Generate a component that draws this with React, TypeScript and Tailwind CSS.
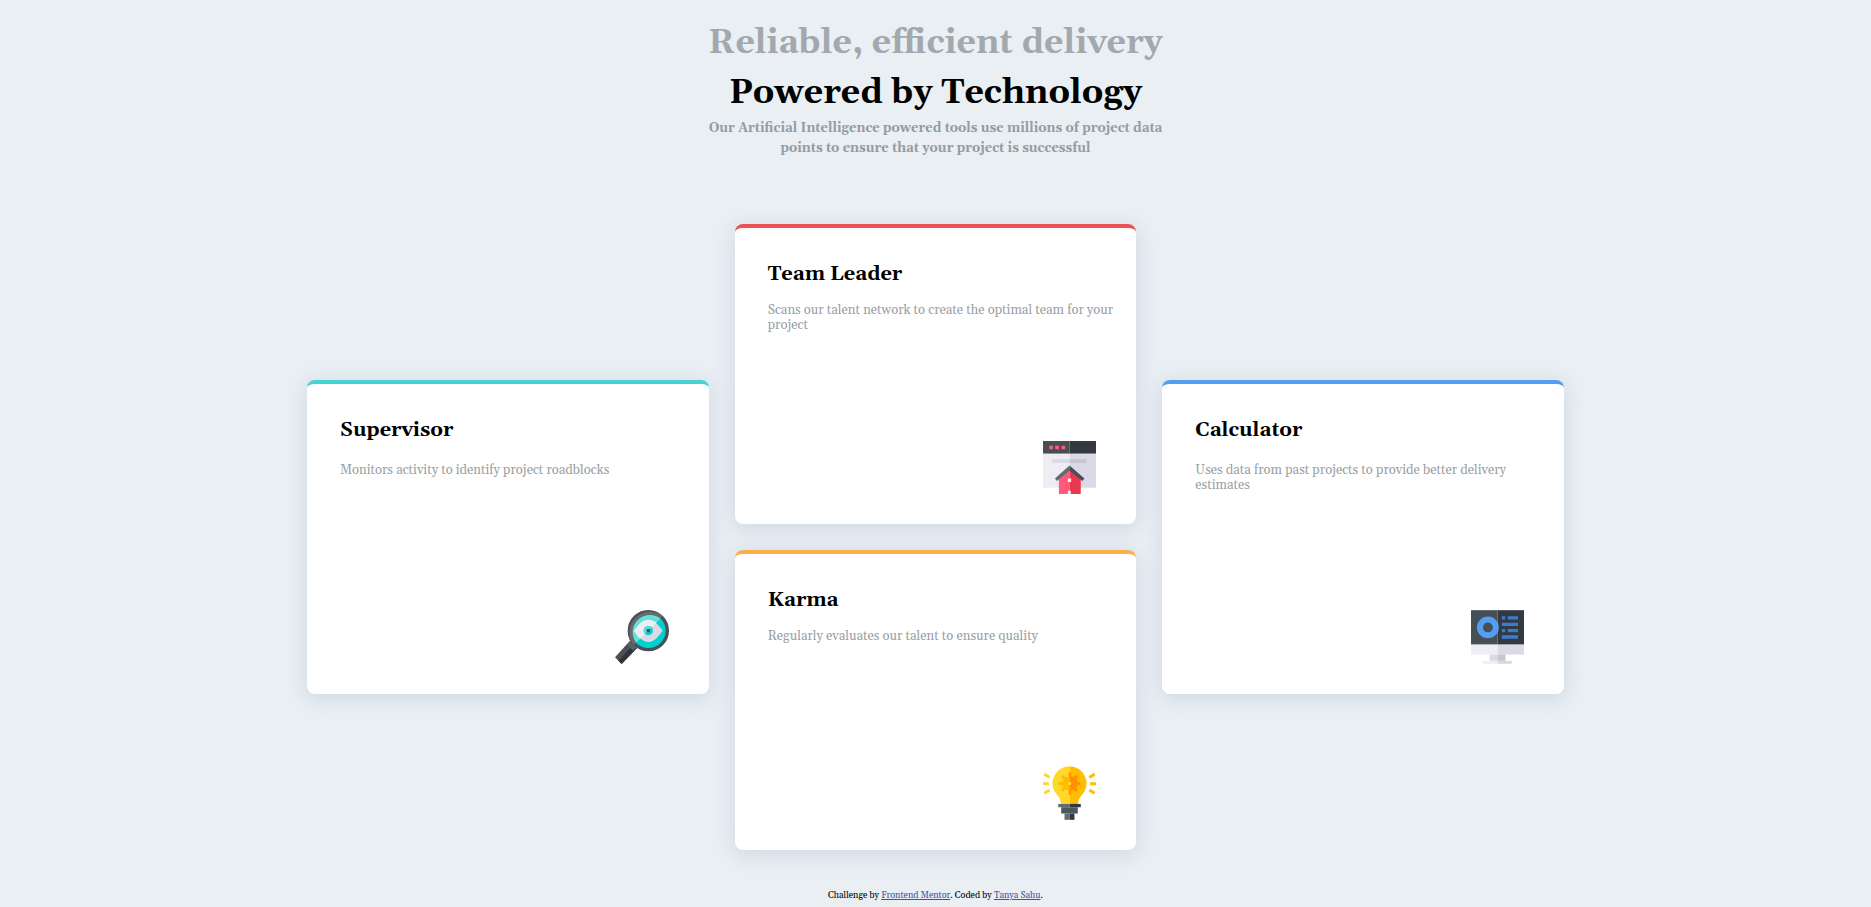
import type { ReactNode } from "react";

function SupervisorIcon() {
  return (
    <svg viewBox="0 0 162 162" className="size-[54px]" aria-hidden="true">
      <path d="M45 92 L66 114 L20 162 L0 142 Z" fill="#4b5056" />
      <path d="M56 103 L66 114 L20 162 L10 152 Z" fill="#2f3439" />
      <path d="M47 94 L59 101 L65 112 L54 122 L37 104 Z" fill="#5a6067" />
      <circle cx="100" cy="62" r="57" fill="#00cfcf" />
      <path d="M60 102 A57 57 0 0 1 140 22 Z" fill="#60e2da" />
      <circle cx="100" cy="62" r="57" fill="none" stroke="#4a5056" strokeWidth="10" />
      <path d="M60 102 A57 57 0 0 1 140 22" fill="none" stroke="#656b71" strokeWidth="10" />
      <path d="M57 62 C72 40 86 29 100 29 C114 29 128 40 143 62 C128 84 114 96 100 96 C86 96 72 84 57 62 Z" fill="#dbd9e5" />
      <path d="M57 62 C72 40 86 29 100 29 C110 29 119 34 125 38 L75 86 C69 80 63 72 57 62 Z" fill="#efedf4" />
      <circle cx="100" cy="62" r="14" fill="#16cccb" />
      <path d="M90 72 A14 14 0 0 1 110 52 Z" fill="#58ddd6" />
      <rect x="95" y="57" width="10" height="10" fill="#4a5056" />
    </svg>
  );
}

function TeamIcon() {
  return (
    <svg viewBox="0 0 160 160" className="size-[53px]" aria-hidden="true">
      <path d="M0 38 H80 V141 H0 Z" fill="#efedf4" />
      <path d="M80 38 H160 V141 H80 Z" fill="#dbd9e5" />
      <path d="M0 0 H80 V38 H0 Z" fill="#474f56" />
      <path d="M80 0 H160 V38 H80 Z" fill="#323940" />
      <path d="M19 14 H30 V25 H19 Z M37 14 H48 V25 H37 Z M56 14 H67 V25 H56 Z" fill="#ff5b78" />
      <path d="M28 55 H80 V66 H28 Z" fill="#dbd9e5" />
      <path d="M80 55 H131 V66 H80 Z" fill="#c7c5d2" />
      <path d="M48 110 L80 84 V160 H48 Z" fill="#ff5b78" />
      <path d="M80 84 L114 110 V160 H80 Z" fill="#e9374f" />
      <path d="M80 74 V90 L42 121 L36 113 Z" fill="#656b71" />
      <path d="M80 74 L125 113 L119 121 L80 90 Z" fill="#474f56" />
      <path d="M75 113 H85 V124 H75 Z M75 150 H84 V160 H75 Z" fill="#efedf4" />
    </svg>
  );
}

function CalculatorIcon() {
  return (
    <svg viewBox="0 0 160 162" className="h-[54px] w-[53px]" aria-hidden="true">
      <path d="M0 0 H80 V104 H0 Z" fill="#474f56" />
      <path d="M80 0 H160 V104 H80 Z" fill="#323940" />
      <path d="M0 104 H80 V134 H0 Z" fill="#efedf4" />
      <path d="M80 104 H160 V134 H80 Z" fill="#dbd9e5" />
      <path d="M56 134 H80 V153 H56 Z" fill="#dbd9e5" />
      <path d="M80 134 H104 V153 H80 Z" fill="#c7c5d2" />
      <path d="M37 153 H80 V162 H37 Z" fill="#efedf4" />
      <path d="M80 153 H123 V162 H80 Z" fill="#dbd9e5" />
      <circle cx="51" cy="52" r="24" fill="none" stroke="#549ef2" strokeWidth="18" />
      <path
        d="M93 18 H103 V28 H93 Z M111 18 H142 V28 H111 Z M93 38 H142 V48 H93 Z M93 57 H103 V67 H93 Z M111 57 H142 V67 H111 Z M93 76 H142 V86 H93 Z"
        fill="#3b7ccc"
      />
    </svg>
  );
}

function KarmaIcon() {
  return (
    <svg viewBox="0 0 160 162" className="h-[54px] w-[53px]" aria-hidden="true">
      <path d="M80 0 A52 52 0 0 0 43 88 C51 96 54 103 54 114 H80 Z" fill="#ffd82b" />
      <path d="M80 0 A52 52 0 0 1 117 88 C109 96 106 103 106 114 H80 Z" fill="#ffbe00" />
      <g stroke="#ffbc00" strokeWidth="9">
        <path d="M80 19 V34 M80 71 V86 M47 52 H62 M57 29 L67 39 M57 75 L67 65" />
      </g>
      <path d="M80 31 A21 21 0 0 0 80 73 V57 A5 5 0 0 1 80 47 Z" fill="#ffbc00" />
      <g stroke="#ff9100" strokeWidth="9">
        <path d="M98 52 H113 M93 39 L103 29 M93 65 L103 75" />
      </g>
      <path d="M80 19 H85 V31 A21 21 0 0 1 85 73 V86 H80 V57 A5 5 0 0 0 80 47 Z" fill="#ff9100" />
      <circle cx="80" cy="52" r="5" fill="#ffd82b" />
      <g stroke="#ffd82b" strokeWidth="9">
        <path d="M0 53 H18 M4 24 L20 34 M4 82 L20 72" />
      </g>
      <g stroke="#ffbe00" strokeWidth="9">
        <path d="M142 53 H160 M156 24 L140 34 M156 82 L140 72" />
      </g>
      <path d="M46 114 H80 V124 H46 Z" fill="#656b71" />
      <path d="M80 114 H114 V124 H80 Z" fill="#323940" />
      <path d="M55 124 H105 V143 H55 Z" fill="#4e565d" />
      <path d="M65 143 H80 V162 H65 Z" fill="#656b71" />
      <path d="M80 143 H95 V162 H80 Z" fill="#323940" />
    </svg>
  );
}

type CardProps = {
  title: string;
  text: string;
  accent: string;
  height: string;
  gap: string;
  icon: ReactNode;
};

function Card({ title, text, accent, height, gap, icon }: CardProps) {
  return (
    <article
      className={`flex flex-col rounded-lg border-t-4 bg-white pt-[33px] pr-2 pb-[30px] pl-[33px] shadow-[0_4px_20px_rgba(120,140,175,0.25)] ${height} ${accent}`}
    >
      <h2 className="text-xl leading-[26px] font-bold text-black">{title}</h2>
      <p className={`text-[13px] leading-[15px] text-[#9a9fa5] ${gap}`}>{text}</p>
      <div className="mt-auto mr-8 self-end">{icon}</div>
    </article>
  );
}

export default function App() {
  return (
    <div className="flex min-h-screen flex-col items-center bg-[#e9eff3] px-6 font-[Georgia,Gelasio,'Liberation_Serif',serif]">
      <header className="pt-[18px] text-center">
        <h1 className="text-[34px] leading-[50px] font-bold text-black">
          <span className="block text-[#a2a8ad]">Reliable, efficient delivery</span>
          Powered by Technology
        </h1>
        <p className="mx-auto max-w-[480px] text-[13px] leading-5 font-bold text-[#949ba1]">
          Our Artificial Intelligence powered tools use millions of project data points to ensure that your project is
          successful
        </p>
      </header>

      <main className="mt-[66px] grid w-full max-w-[1257px] grid-cols-1 items-center gap-[26px] md:grid-cols-3">
        <Card
          title="Supervisor"
          text="Monitors activity to identify project roadblocks"
          accent="border-[#44d3d2]"
          height="min-h-[314px]"
          gap="mt-5"
          icon={<SupervisorIcon />}
        />
        <div className="grid gap-[26px]">
          <Card
            title="Team Leader"
            text="Scans our talent network to create the optimal team for your project"
            accent="border-[#ea5353]"
            height="min-h-[300px]"
            gap="mt-4"
            icon={<TeamIcon />}
          />
          <Card
            title="Karma"
            text="Regularly evaluates our talent to ensure quality"
            accent="border-[#fcae4a]"
            height="min-h-[300px]"
            gap="mt-4"
            icon={<KarmaIcon />}
          />
        </div>
        <Card
          title="Calculator"
          text="Uses data from past projects to provide better delivery estimates"
          accent="border-[#549ef2]"
          height="min-h-[314px]"
          gap="mt-5"
          icon={<CalculatorIcon />}
        />
      </main>

      <footer className="mt-auto pb-[3px] text-center text-[9px] leading-4 text-black">
        Challenge by{" "}
        <a href="https://www.frontendmentor.io" className="text-[#3e52a3] underline">
          Frontend Mentor
        </a>
        . Coded by{" "}
        <a href="#" className="text-[#3e52a3] underline">
          Tanya Sahu
        </a>
        .
      </footer>
    </div>
  );
}
